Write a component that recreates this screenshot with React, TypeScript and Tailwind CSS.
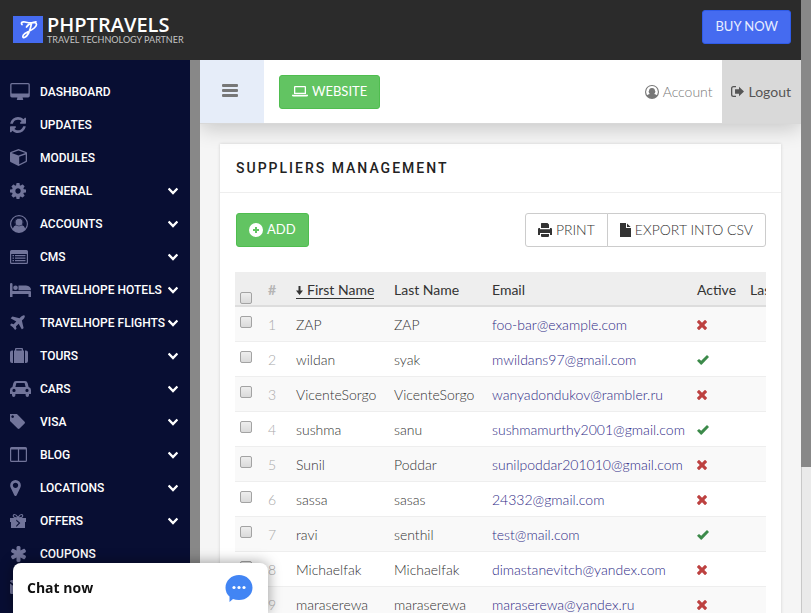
import type { ReactNode } from "react";

function Glyph({ box, className, children }: { box: string; className?: string; children: ReactNode }) {
  return (
    <svg viewBox={box} className={className} fill="currentColor" fillRule="evenodd" aria-hidden="true">
      {children}
    </svg>
  );
}

const Desktop = () => (
  <Glyph box="0 0 1920 1664" className="h-[17px] w-[20px]">
    <path d="M1792 992v-832q0-13-9.5-22.5t-22.5-9.5h-1600q-13 0-22.5 9.5t-9.5 22.5v832q0 13 9.5 22.5t22.5 9.5h1600q13 0 22.5-9.5t9.5-22.5zm128-832v1088q0 66-47 113t-113 47h-544q0 37 16 77.5t32 71 16 43.5q0 26-19 45t-45 19h-512q-26 0-45-19t-19-45q0-14 16-44t32-70 16-78h-544q-66 0-113-47t-47-113v-1088q0-66 47-113t113-47h1600q66 0 113 47t47 113z" />
  </Glyph>
);
const Refresh = () => (
  <Glyph box="128 128 1536 1536" className="size-4">
    <path d="M1639 1056q0 5-1 7-64 268-268 434.5t-478 166.5q-146 0-282.5-55t-243.5-157l-129 129q-19 19-45 19t-45-19-19-45v-448q0-26 19-45t45-19h448q26 0 45 19t19 45-19 45l-137 137q71 66 161 102t187 36q134 0 250-65t186-179q11-17 53-117 8-23 30-23h192q13 0 22.5 9.5t9.5 22.5zm25-800v448q0 26-19 45t-45 19h-448q-26 0-45-19t-19-45 19-45l138-138q-148-137-349-137-134 0-250 65t-186 179q-11 17-53 117-8 23-30 23h-199q-13 0-22.5-9.5t-9.5-22.5v-7q65-268 270-434.5t480-166.5q146 0 284 55.5t245 156.5l130-129q19-19 45-19t45 19 19 45z" />
  </Glyph>
);
const Cube = () => (
  <Glyph box="0 0 17 17" className="size-[17px]">
    <path d="M8.5 0 16.4 3Q17 3.300 17 4V12Q17 12.600 16.500 12.900L8.500 17 .5 12.900Q0 12.600 0 12V4Q0 3.300 .6 3ZM8.500 1.400 1.600 4 8.500 6.500 15.400 4ZM9.200 7.800V15.200L15.700 11.900V5.400Z" />
  </Glyph>
);
const Cog = () => (
  <Glyph box="128 128 1536 1536" className="size-4">
    <path d="M1152 896q0-106-75-181t-181-75-181 75-75 181 75 181 181 75 181-75 75-181zm512-109v222q0 12-8 23t-20 13l-185 28q-19 54-39 91 35 50 107 138 10 12 10 25t-9 23q-27 37-99 108t-94 71q-12 0-26-9l-138-108q-44 23-91 38-16 136-29 186-7 28-36 28h-222q-14 0-24.5-8.5t-11.500-21.500l-28-184q-49-16-90-37l-141 107q-10 9-25 9-14 0-25-11-126-114-165-168-7-10-7-23 0-12 8-23 15-21 51-66.500t54-70.500q-27-50-41-99l-183-27q-13-2-21-12.500t-8-23.500v-222q0-12 8-23t19-13l186-28q14-46 39-92-40-57-107-138-10-12-10-24 0-10 9-23 26-36 98.500-107.500t94.500-71.500q13 0 26 10l138 107q44-23 91-38 16-136 29-186 7-28 36-28h222q14 0 24.500 8.500t11.500 21.500l28 184q49 16 90 37l142-107q9-9 24-9 13 0 25 10 129 119 165 170 7 8 7 22 0 12-8 23-15 21-51 66.500t-54 70.500q26 50 41 98l183 28q13 2 21 12.500t8 23.500z" />
  </Glyph>
);
const UserCircle = () => (
  <Glyph box="0 0 18 18" className="size-[18px]">
    <path d="M9 0a9 9 0 1 1 0 18A9 9 0 0 1 9 0Zm0 1.300A7.700 7.700 0 0 0 2.800 13.600Q3.700 10.600 6 10.300 4.700 9 4.700 7.200A4.300 4.300 0 0 1 13.300 7.200Q13.300 9 12 10.300 14.300 10.600 15.200 13.600A7.700 7.700 0 0 0 9 1.300Z" />
    <path d="M4.700 7.200a4.300 4.300 0 0 1 8.600 0q0 1.800-1.300 3.100-1.400 1-3 1t-3-1Q4.700 9 4.700 7.200Z" fill="#080e33" />
    <path d="M9 3.700a3.500 3.500 0 1 1 0 7 3.500 3.500 0 0 1 0-7Z" />
  </Glyph>
);
const AccountCircle = () => (
  <Glyph box="0 0 14 14" className="size-[14px]">
    <path d="M7 0a7 7 0 1 1 0 14A7 7 0 0 1 7 0Zm0 1.100A5.900 5.900 0 0 0 2 10.200Q3 9.300 4.800 9 3.600 7.800 3.600 5.900h.9A2.500 2.500 0 0 1 9.500 5.900h.9Q10.400 7.800 9.200 9 11 9.300 12 10.200A5.900 5.900 0 0 0 7 1.100Z" />
    <path d="M7 2.900a2.900 2.900 0 1 1 0 5.900 2.900 2.900 0 0 1 0-5.900Z" />
  </Glyph>
);
const ListAlt = () => (
  <Glyph box="0 0 18 14" className="h-[14px] w-[18px]">
    <path d="M1.500 0h15Q18 0 18 1.500v11Q18 14 16.500 14h-15Q0 14 0 12.500v-11Q0 0 1.500 0ZM1.200 4v8.300q0 .5 .5 .5h14.600q.5 0 .5-.5V4Z" />
    <path d="M2.500 5H4v1.200H2.500ZM5 5h10.500v1.200H5ZM2.500 7.500H4v1.200H2.500ZM5 7.500h10.500v1.200H5ZM2.500 10H4v1.200H2.500ZM5 10h10.500v1.200H5Z" />
  </Glyph>
);
const Bed = () => (
  <Glyph box="0 0 21 14" className="h-[14px] w-[21px]">
    <path d="M0 1Q0 0 1.200 0T2.500 1V8H20Q21 8 21 9V14H18.500V11H2.500V14H0ZM5.500 2.500a2.300 2.300 0 1 1 0 4.600 2.300 2.300 0 0 1 0-4.600ZM8.500 2.500H16Q21 3 21 7.200H8.500Z" />
  </Glyph>
);
const Plane = () => (
  <Glyph box="180 110 1430 1430" className="size-[15px]">
    <path d="M1568 160q44 52 12 148t-108 172l-161 161 160 696q5 19-12 33l-128 96q-7 6-19 6-4 0-7-1-15-3-21-16l-279-508-259 259 53 194q5 17-8 31l-96 96q-9 9-23 9h-2q-15-2-24-13l-189-252-252-189q-11-7-13-23-1-13 9-25l96-97q9-9 23-9 6 0 8 1l194 53 259-259-508-279q-14-8-17-24-2-16 9-27l128-128q14-13 30-8l665 159 160-160q76-76 172-108t148 12z" />
  </Glyph>
);
const Suitcase = () => (
  <Glyph box="0 0 18 15" className="h-[15px] w-[18px]">
    <path d="M6 0h6q1 0 1 1v1.500h1V15H4V2.500H5V1q0-1 1-1Zm.3 1.200v1.300h5.400V1.200ZM2 2.500h1V15H2Q0 15 0 13V4.500Q0 2.500 2 2.500Zm13 0h1q2 0 2 2V13q0 2-2 2h-1Z" />
  </Glyph>
);
const Car = () => (
  <Glyph box="0 0 21 16" className="h-4 w-[21px]">
    <path d="M6 0h9q2 0 2.600 2L18.600 6Q21 6.500 21 9v3.500q0 .5-.5 .5H19v1.300a1.700 1.700 0 0 1-3.400 0V13H5.400v1.300a1.700 1.700 0 0 1-3.400 0V13H.5Q0 13 0 12.500V9Q0 6.500 2.400 6L3.400 2Q4 0 6 0Zm.4 2L5.400 6h10.200l-1-4ZM4 7.800a1.600 1.600 0 1 0 0 3.200 1.600 1.600 0 0 0 0-3.200Zm13 0a1.600 1.600 0 1 0 0 3.200 1.600 1.600 0 0 0 0-3.200Z" />
  </Glyph>
);
const Tag = () => (
  <Glyph box="192 192 1452 1452" className="size-[15px]">
    <path d="M576 448q0-53-37.500-90.500t-90.500-37.500-90.500 37.500-37.500 90.500 37.500 90.500 90.500 37.500 90.500-37.500 37.500-90.500zm1067 576q0 53-37 90l-491 492q-39 37-91 37-53 0-90-37l-715-716q-38-37-64.500-101t-26.500-117v-416q0-52 38-90t90-38h416q53 0 117 26.500t102 64.500l715 714q37 39 37 91z" />
  </Glyph>
);
const Columns = () => (
  <Glyph box="0 0 17 15" className="h-[15px] w-[17px]">
    <path d="M1.500 0h14Q17 0 17 1.500v12q0 1.500-1.500 1.500h-14Q0 15 0 13.500v-12Q0 0 1.500 0ZM1.200 2.500v11.300H7.900V2.500ZM9.100 2.500v11.300h6.700V2.500Z" />
  </Glyph>
);
const Marker = () => (
  <Glyph box="384 128 1024 1536" className="h-[16px] w-[11px]">
    <path d="M1152 640q0-106-75-181t-181-75-181 75-75 181 75 181 181 75 181-75 75-181zm256 0q0 109-33 179l-364 774q-16 33-47.500 52t-67.500 19-67.500-19-46.500-52l-365-774q-33-70-33-179 0-212 150-362t362-150 362 150 150 362z" />
  </Glyph>
);
const Gift = () => (
  <Glyph box="0 0 16 14" className="h-[14px] w-4">
    <path d="M4.500 0Q6.500 0 8 2.500 9.500 0 11.500 0 13.500 .2 13.300 2q-.1 1.500-1.800 2H16V8h-1v6H1V8H0V4h4.500Q2.800 3.500 2.700 2 2.500 .2 4.500 0Zm0 1Q3.500 1.300 3.800 2.200 4.300 3 7 3.200 6 1 4.500 1Zm7 0Q10 1 9 3.200q2.700-.2 3.200-1Q12.500 1.300 11.500 1ZM6.300 5.500 10.300 9 6.300 13v-1.500L8.800 9 6.300 7Z" />
  </Glyph>
);
const Asterisk = () => (
  <Glyph box="180 128 1432 1536" className="ml-px h-4 w-[15px]">
    <path d="M1546 1050q46 26 59.500 77.500t-12.500 97.500l-64 110q-26 46-77.500 59.500t-97.500-12.500l-266-153v307q0 52-38 90t-90 38h-128q-52 0-90-38t-38-90v-307l-266 153q-46 26-97.500 12.500t-77.500-59.500l-64-110q-26-46-12.500-97.500t59.500-77.500l266-154-266-154q-46-26-59.500-77.500t12.500-97.500l64-110q26-46 77.500-59.500t97.500 12.500l266 153v-307q0-52 38-90t90-38h128q52 0 90 38t38 90v307l266-153q46-26 97.500-12.500t77.500 59.500l64 110q26 46 12.500 97.500t-59.500 77.500l-266 154z" />
  </Glyph>
);
const Envelope = () => (
  <Glyph box="0 0 18 14" className="h-[14px] w-[18px]">
    <path d="M0 1.500Q0 0 1.500 0h15Q18 0 18 1.500L9 8ZM0 3.500 9 10l9-6.500v9q0 1.500-1.500 1.500h-15Q0 14 0 12.500Z" />
  </Glyph>
);
const Chevron = () => (
  <svg viewBox="0 0 10 8" className="ml-auto h-2 w-[10px] shrink-0" fill="none" stroke="currentColor" strokeWidth="2.4" aria-hidden="true">
    <path d="M.6 1.500 5 6 9.400 1.500" />
  </svg>
);
const Laptop = () => (
  <Glyph box="0 0 16 11" className="h-[11px] w-4">
    <path d="M3 0h10q1 0 1 1v7H2V1q0-1 1-1Zm.3 1.200v5.600h9.400V1.200ZM0 8.700h16v.8q0 1-1.500 1h-13Q0 10.500 0 9.500Z" />
  </Glyph>
);
const Logout = () => (
  <Glyph box="0 0 13 11" className="h-[11px] w-[13px]">
    <path d="M5 0v1.300H2.500q-1.200 0-1.200 1.200v6q0 1.200 1.200 1.200H5V11H2.500Q0 11 0 8.500v-6Q0 0 2.500 0ZM8 .7l5 4.800L8 10.300V7.800H4V3.200h4Z" />
  </Glyph>
);
const PlusCircle = () => (
  <Glyph box="0 0 14 14" className="size-[14px]">
    <path d="M7 0a7 7 0 1 1 0 14A7 7 0 0 1 7 0ZM6 4v2H4v2h2v2h2V8h2V6H8V4Z" />
  </Glyph>
);
const Printer = () => (
  <Glyph box="0 0 14 14" className="size-[14px]">
    <path d="M3.500 0h6l1.500 1.500V5H3V1Q3 0 3.500 0ZM0 6q0-1 1-1h1v1.200h10V5h1q1 0 1 1v6h-2v-2H2v2H0ZM3 11h8v2q0 1-1 1H4q-1 0-1-1Z" />
  </Glyph>
);
const FileIcon = () => (
  <Glyph box="0 0 11 14" className="h-[14px] w-[11px]">
    <path d="M0 0h6v5h5v9H0ZM7 .5 10.700 4H7Z" />
  </Glyph>
);
const ArrowDown = () => (
  <Glyph box="0 0 7 9" className="mr-1 inline-block h-[9px] w-[7px] align-baseline">
    <path d="M2.500 0h2v4.500H7L3.500 9 0 4.500h2.500Z" />
  </Glyph>
);
const Check = () => (
  <svg viewBox="0 0 12 10" className="h-[10px] w-3 text-[#3c8a4a]" fill="currentColor" role="img" aria-label="Active">
    <path d="M0 5.800 2 3.900 4.200 5.700 10 0 12 2 4.600 9.700H3.900Z" />
  </svg>
);
const Cross = () => (
  <svg viewBox="300 364 1190 1190" className="size-[10px] text-[#bd4140]" fill="currentColor" role="img" aria-label="Inactive">
    <path d="M1490 1322q0 40-28 68l-136 136q-28 28-68 28t-68-28l-294-294-294 294q-28 28-68 28t-68-28l-136-136q-28-28-28-68t28-68l294-294-294-294q-28-28-28-68t28-68l136-136q28-28 68-28t68 28l294 294 294-294q28-28 68-28t68 28l136 136q28 28 28 68t-28 68l-294 294 294 294q28 28 28 68z" />
  </svg>
);

const menu: { label: string; icon: ReactNode; sub?: boolean }[] = [
  { label: "DASHBOARD", icon: <Desktop /> },
  { label: "UPDATES", icon: <Refresh /> },
  { label: "MODULES", icon: <Cube /> },
  { label: "GENERAL", icon: <Cog />, sub: true },
  { label: "ACCOUNTS", icon: <UserCircle />, sub: true },
  { label: "CMS", icon: <ListAlt />, sub: true },
  { label: "TRAVELHOPE HOTELS", icon: <Bed />, sub: true },
  { label: "TRAVELHOPE FLIGHTS", icon: <Plane />, sub: true },
  { label: "TOURS", icon: <Suitcase />, sub: true },
  { label: "CARS", icon: <Car />, sub: true },
  { label: "VISA", icon: <Tag />, sub: true },
  { label: "BLOG", icon: <Columns />, sub: true },
  { label: "LOCATIONS", icon: <Marker />, sub: true },
  { label: "OFFERS", icon: <Gift />, sub: true },
  { label: "COUPONS", icon: <Asterisk /> },
  { label: "", icon: <Envelope /> },
];

const suppliers = [
  { first: "ZAP", last: "ZAP", email: "foo-bar@example.com", active: false },
  { first: "wildan", last: "syak", email: "mwildans97@gmail.com", active: true },
  { first: "VicenteSorgo", last: "VicenteSorgo", email: "wanyadondukov@rambler.ru", active: false },
  { first: "sushma", last: "sanu", email: "sushmamurthy2001@gmail.com", active: true },
  { first: "Sunil", last: "Poddar", email: "sunilpoddar201010@gmail.com", active: false },
  { first: "sassa", last: "sasas", email: "24332@gmail.com", active: false },
  { first: "ravi", last: "senthil", email: "test@mail.com", active: true },
  { first: "Michaelfak", last: "Michaelfak", email: "dimastanevitch@yandex.com", active: false },
  { first: "maraserewa", last: "maraserewa", email: "maraserewa@yandex.ru", active: false },
];

function Tick({ label }: { label: string }) {
  return (
    <input
      type="checkbox"
      aria-label={label}
      className="block size-3 appearance-none rounded-xs border border-[#a3a3a3] bg-linear-to-b from-[#eeeeee] to-[#dadada]"
    />
  );
}

function TopBar() {
  return (
    <header className="flex h-[60px] shrink-0 items-start justify-between bg-[#2b2b2b] pl-[13px] pr-[10px]">
      <a href="#" className="flex pt-4 text-white">
        <svg viewBox="0 0 30 27" className="h-[27px] w-[30px]" aria-hidden="true">
          <rect width="30" height="27" fill="#456bf0" />
          <path
            d="M9 8.500C7.500 6.500 9.500 5.500 12 6 15 6.700 18.500 8 23 5.800M18.500 7.500C17.500 13 15 20 11.500 21.500 9.300 22.200 9.300 19.500 11.500 17.800 15 15.500 23.500 12.500 23.500 8.500 23.500 5 16.500 6 13.500 11"
            fill="none"
            stroke="#fff"
            strokeWidth="1.700"
            strokeLinecap="round"
          />
        </svg>
        <span className="ml-1 flex flex-col">
          <span className="font-['Open_Sans',sans-serif] text-[20px] leading-[18px] font-semibold">PHPTRAVELS</span>
          <span className="text-[9px] leading-[11px] text-[#c4c4c4]">TRAVEL TECHNOLOGY PARTNER</span>
        </span>
      </a>
      <button type="button" className="mt-[10px] h-[34px] rounded-[3px] border border-[#2f5be8] bg-[#456bf0] px-3 text-[13px] text-[#e8edff]">
        BUY NOW
      </button>
    </header>
  );
}

function Sidebar() {
  return (
    <aside className="flex w-[200px] shrink-0 overflow-hidden">
      <nav className="min-w-0 flex-1 bg-[#080e33] pt-[15px]">
        {menu.map((m, i) => (
          <a key={i} href="#" className="flex h-[33px] items-center pl-[10px] pr-3 text-white">
            <span className="flex w-[30px] shrink-0 items-center text-[#71749a]">{m.icon}</span>
            <span className="font-['Roboto',sans-serif] text-[12px] font-medium whitespace-nowrap">{m.label}</span>
            {m.sub && <Chevron />}
          </a>
        ))}
      </nav>
      <div className="w-[10px] shrink-0 bg-[#888888]" />
    </aside>
  );
}

function NavBar() {
  return (
    <div className="relative z-10 flex h-16 shrink-0 items-stretch border-b border-[#d8d8d8] bg-white shadow-[0_4px_20px_rgba(0,0,0,0.2)]">
      <button type="button" aria-label="Toggle menu" className="flex w-16 items-center bg-[#e6edf9] pl-[22px] pb-[2px]">
        <svg viewBox="0 0 16 13" className="h-[13px] w-4 text-[#777777]" fill="currentColor" aria-hidden="true">
          <rect width="16" height="3" rx="1" />
          <rect y="5" width="16" height="3" rx="1" />
          <rect y="10" width="16" height="3" rx="1" />
        </svg>
      </button>
      <button type="button" className="ml-[15px] flex h-[34px] items-center gap-1 self-center rounded-[3px] border border-[#4fbd4f] bg-[#62c462] px-3 text-[13px] text-white">
        <Laptop />
        WEBSITE
      </button>
      <a href="#" className="ml-auto flex items-center gap-1 pr-[10px] text-sm font-light text-[#777777]">
        <AccountCircle />
        Account
      </a>
      <a href="#" className="flex items-center gap-1 bg-[#d9d9d9] pr-[10px] pl-[9px] text-sm text-[#555555]">
        <Logout />
        Logout
      </a>
    </div>
  );
}

function SuppliersTable() {
  const head = "p-0 px-2 pt-[3px] font-normal";
  const cell = "p-0 px-2 pt-[2px]";
  return (
    <div className="-ml-px mt-[25px] overflow-hidden">
      <table className="w-[600px] table-fixed border-collapse text-left text-sm whitespace-nowrap text-[#333333]">
        <colgroup>
          <col className="w-[25px]" />
          <col className="w-7" />
          <col className="w-[98px]" />
          <col className="w-[98px]" />
          <col className="w-[205px]" />
          <col className="w-[53px]" />
          <col />
        </colgroup>
        <thead>
          <tr className="h-[34px] border-b-2 border-[#dddddd] bg-[#eeeeee]">
            <th className="p-0 pb-px pl-[5px] align-bottom">
              <Tick label="Select all" />
            </th>
            <th className="p-0 px-2 pt-[3px] font-bold text-[#b5b5b5]">#</th>
            <th className={head}>
              <a href="#" className="inline-block border-b border-[#333333] leading-4">
                <ArrowDown />
                First Name
              </a>
            </th>
            <th className={head}>Last Name</th>
            <th className={head}>Email</th>
            <th className={head}>Active</th>
            <th className={head}>Last Login</th>
          </tr>
        </thead>
        <tbody className="font-light">
          {suppliers.map((s, i) => (
            <tr key={s.email} className="h-[35px] border-b border-[#eeeeee] odd:bg-[#f9f9f9]">
              <td className="p-0 pt-[9px] pl-[5px] align-top">
                <Tick label={`Select ${s.first}`} />
              </td>
              <td className="p-0 px-2 pt-[2px] text-[#aaaaaa]">{i + 1}</td>
              <td className={cell}>{s.first}</td>
              <td className={cell}>{s.last}</td>
              <td className={cell}>
                <a href="#" className="text-[#2e2a86]">
                  {s.email}
                </a>
              </td>
              <td className={cell}>{s.active ? <Check /> : <Cross />}</td>
              <td />
            </tr>
          ))}
        </tbody>
      </table>
    </div>
  );
}

export default function App() {
  return (
    <div className="flex h-screen overflow-hidden bg-[#f5f5f5] font-['Lato',sans-serif]">
      <div className="flex min-w-0 flex-1 flex-col">
        <TopBar />
        <div className="flex min-h-0 flex-1">
          <Sidebar />
          <main className="flex min-w-0 flex-1 flex-col overflow-hidden">
            <NavBar />
            <div className="min-h-0 flex-1 overflow-hidden px-5 pt-5">
              <section className="bg-white shadow-[0_0_3px_rgba(0,0,0,0.15)]">
                <h1 className="border-b border-[#eeeeee] px-4 py-[14px] font-['Roboto',sans-serif] text-sm leading-5 font-medium tracking-[2px] text-[#222222]">
                  SUPPLIERS MANAGEMENT
                </h1>
                <div className="px-4 pt-5 pr-[15px]">
                  <div className="flex items-center">
                    <button type="button" className="flex h-[34px] items-center gap-1 rounded-[3px] border border-[#4fbd4f] bg-[#62c462] px-3 text-[13px] text-white">
                      <PlusCircle />
                      ADD
                    </button>
                    <div className="ml-auto flex text-sm font-light text-[#333333]">
                      <button type="button" className="flex h-[34px] items-center gap-1 rounded-l-[3px] border border-[#cccccc] bg-white px-3">
                        <Printer />
                        PRINT
                      </button>
                      <button type="button" className="-ml-px flex h-[34px] items-center gap-1 rounded-r-[3px] border border-[#cccccc] bg-white px-3">
                        <FileIcon />
                        EXPORT INTO CSV
                      </button>
                    </div>
                  </div>
                  <SuppliersTable />
                </div>
              </section>
            </div>
          </main>
        </div>
      </div>
      <div className="w-[10px] shrink-0 border-l border-[#c8c8c8] bg-[#eaeaea]">
        <div className="-ml-px h-[467px] bg-[#888888]" />
      </div>
      <button
        type="button"
        className="fixed bottom-0 left-[13px] z-20 flex h-[50px] w-[255px] items-center justify-between rounded-t-lg bg-white pr-[15px] pl-[14px] font-['Open_Sans',sans-serif] text-sm font-bold text-[#111111] shadow-[0_0_14px_rgba(0,0,0,0.4)]"
      >
        Chat now
        <svg viewBox="0 0 28 27" className="h-[27px] w-7" aria-hidden="true">
          <path d="M14 0C21.500 0 27.500 5.500 27.500 12.700S21.500 25 14 25Q10.500 25 8 24L4.500 27V21.500Q.5 18 .5 12.700C.5 5.500 6.500 0 14 0Z" fill="#4285f4" />
          <circle cx="9" cy="12.500" r="1.600" fill="#fff" />
          <circle cx="14" cy="12.500" r="1.600" fill="#fff" />
          <circle cx="19" cy="12.500" r="1.600" fill="#fff" />
        </svg>
      </button>
    </div>
  );
}
